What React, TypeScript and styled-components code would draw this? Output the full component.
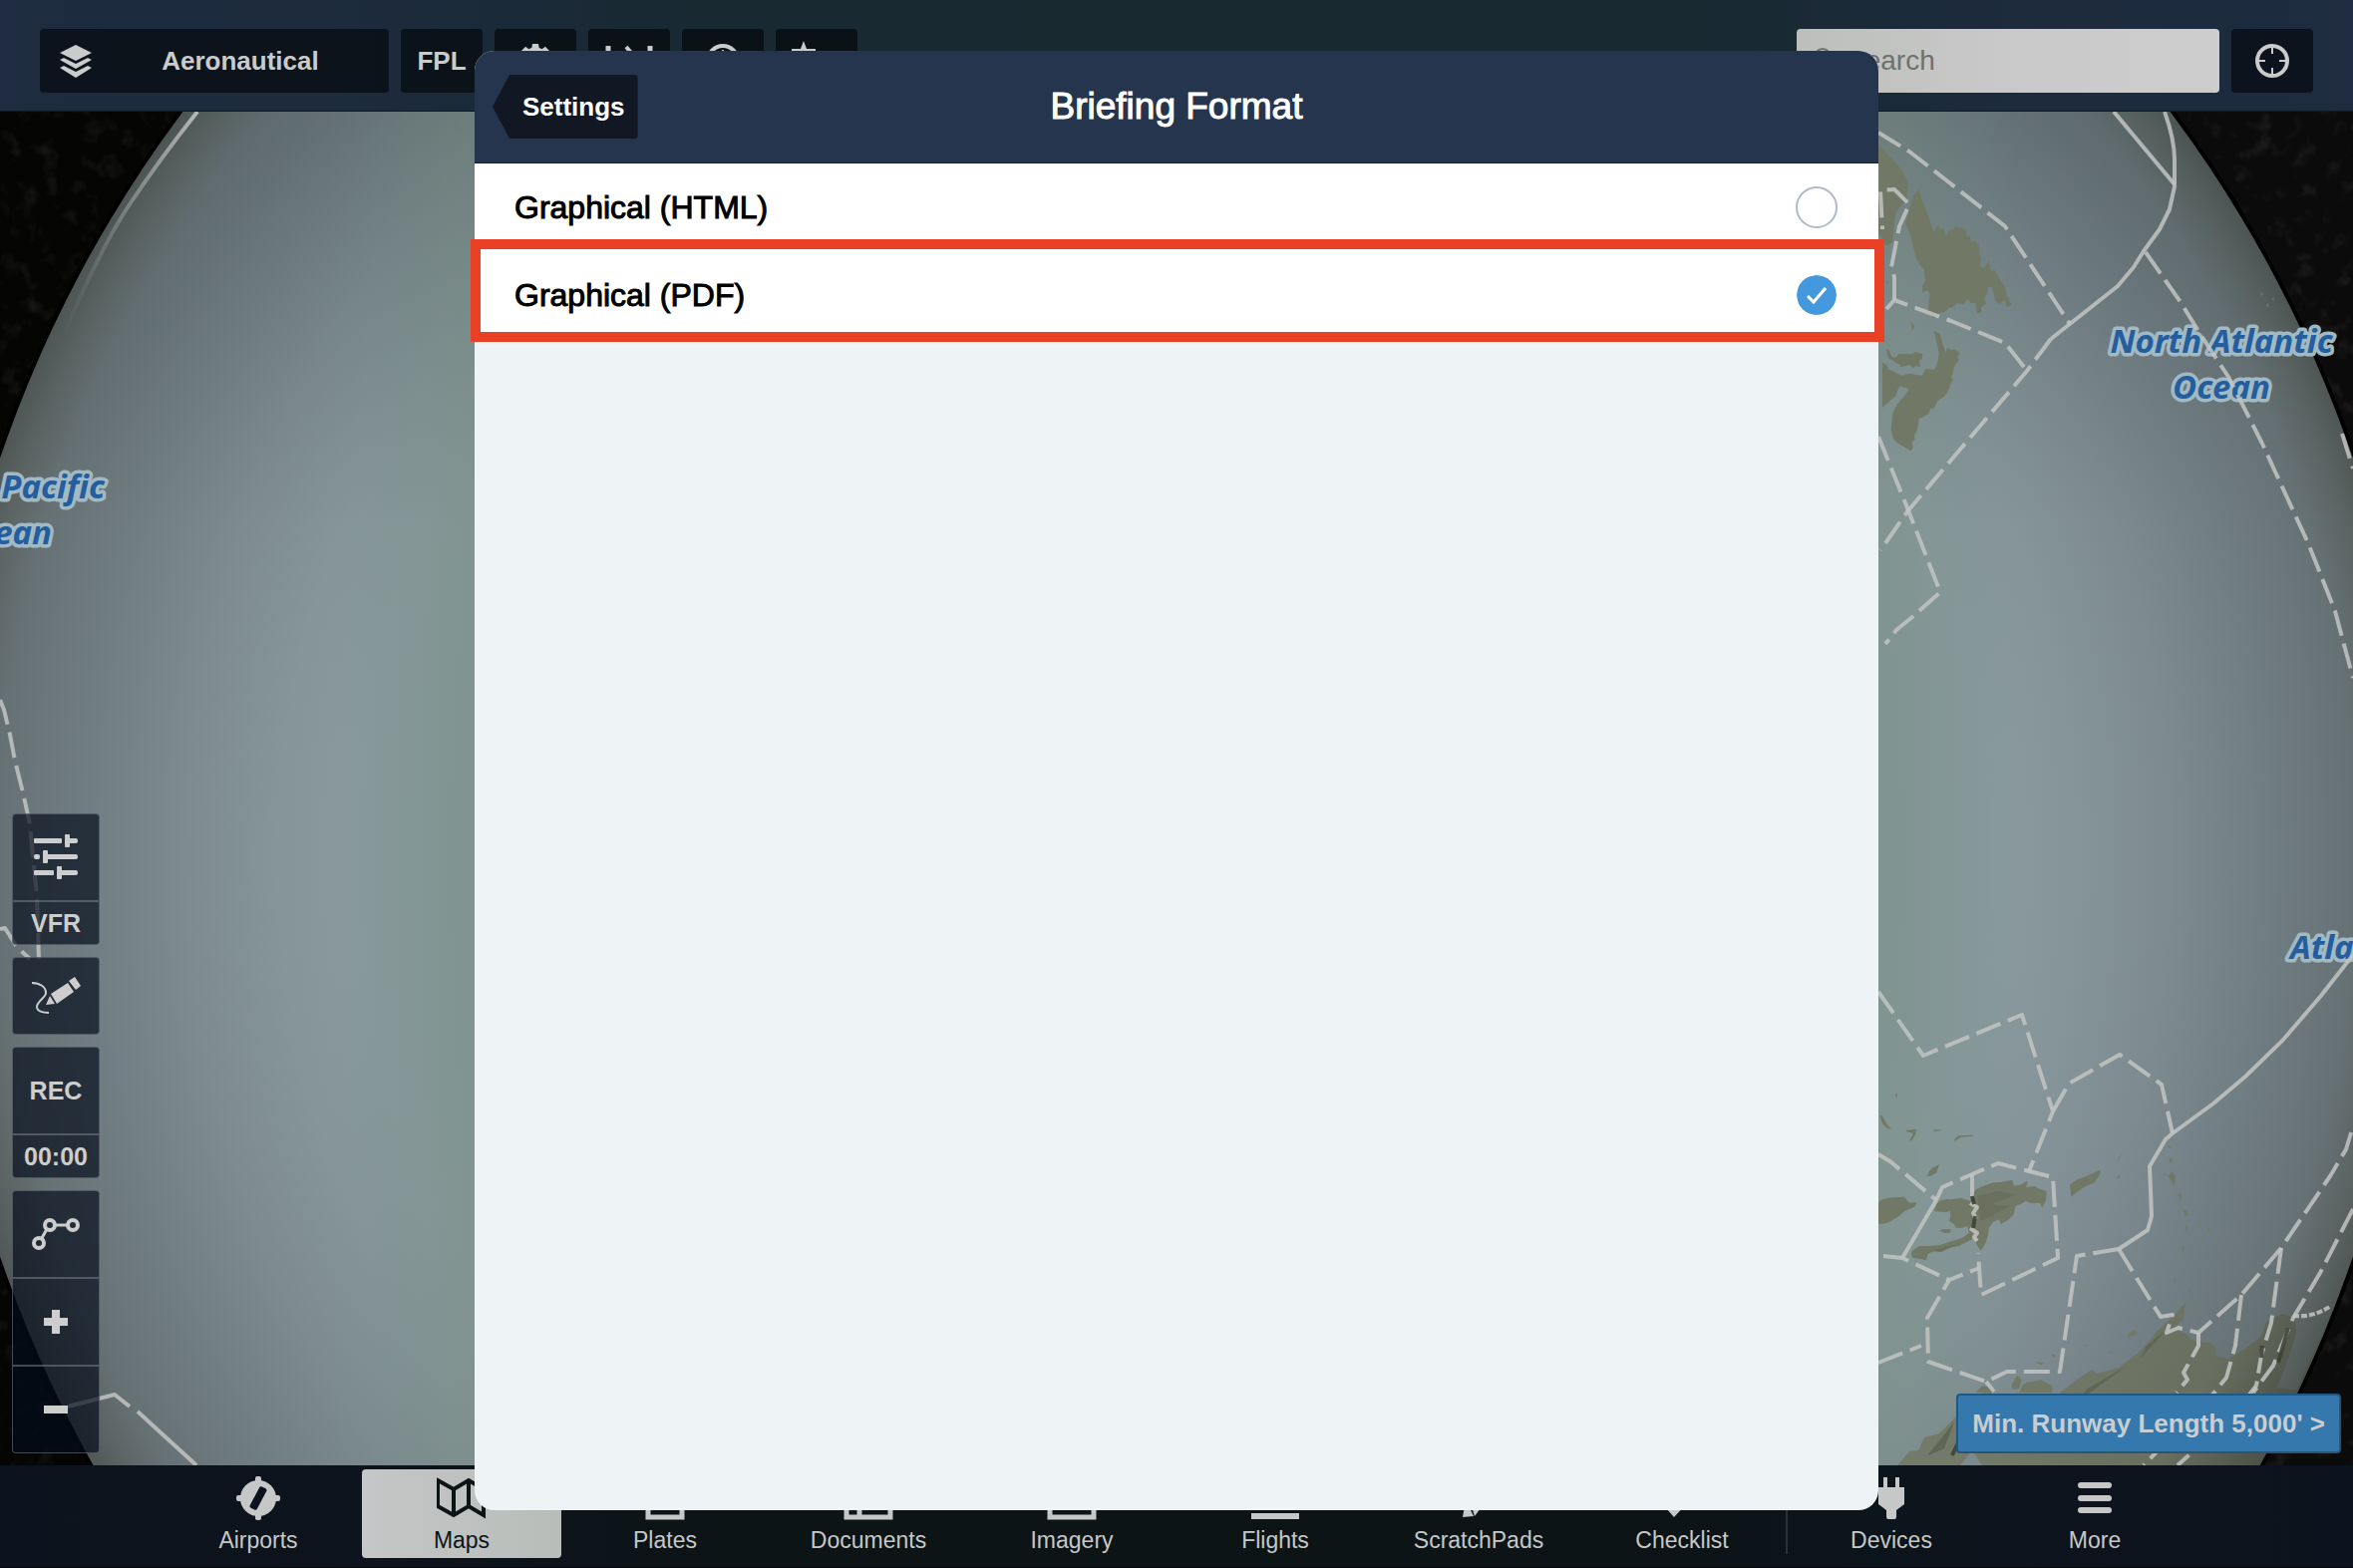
import React from 'react';
import styled, { createGlobalStyle, css } from 'styled-components';

const GlobalStyle = createGlobalStyle`
  *, *::before, *::after { box-sizing: border-box; }
  body {
    margin: 0;
    background: #050505;
    font-family: "Liberation Sans", Arial, Helvetica, sans-serif;
  }
  button, input { font: inherit; margin: 0; }
`;

const Page = styled.div`
  position: relative;
  display: flex;
  flex-direction: column;
  height: 100vh;
  overflow: hidden;
`;

/* ---------- top bar ---------- */

const TopBar = styled.header`
  display: flex;
  flex: none;
  align-items: center;
  gap: 12px;
  padding: 29px 40px 18px;
  border-bottom: 1px solid #0f1b22;
  background: linear-gradient(90deg, #1e2b40 0%, #1d2b3d 14%, #192933 28%, #182930 50%, #192933 74%, #1d2b3d 86%, #1e2b40 100%);
`;

const barButton = css`
  display: flex;
  align-items: center;
  justify-content: center;
  height: 64px;
  padding: 0;
  border: 0;
  border-radius: 4px;
  background: rgba(2, 5, 6, 0.62);
  color: #cacccb;
  font-size: 26px;
  font-weight: 700;
`;

const BarButton = styled.button`
  ${barButton}
  flex: none;
  width: 82px;
`;

const LayerButton = styled.button`
  ${barButton}
  width: 350px;
  padding-left: 20px;
`;

const LayerName = styled.span`
  flex: 1;
  text-align: center;
`;

const SearchBox = styled.label`
  display: flex;
  align-items: center;
  gap: 14px;
  width: 424px;
  height: 64px;
  margin-left: auto;
  padding: 0 16px;
  border-radius: 4px;
  background: linear-gradient(90deg, #bcbfbb 0%, #c9c9c9 50%, #cdcdcd 100%);
  color: #6f7170;
`;

const SearchInput = styled.input`
  flex: 1;
  min-width: 0;
  padding: 0;
  border: 0;
  outline: 0;
  background: transparent;
  color: #333;
  font-size: 28px;
  &::placeholder { color: #6f7170; opacity: 1; }
`;

/* ---------- map ---------- */

const MapArea = styled.main`
  position: relative;
  flex: 1;
  min-height: 0;
`;

const MapCanvas = styled.svg`
  position: absolute;
  inset: 0;
  width: 100%;
  height: 100%;
`;

const MapTools = styled.div`
  position: absolute;
  left: 12px;
  bottom: 12px;
  display: flex;
  flex-direction: column;
  gap: 12px;
  width: 88px;
`;

const ToolGroup = styled.div`
  display: flex;
  flex-direction: column;
  border: 1px solid rgba(125, 135, 145, 0.5);
  border-radius: 4px;
  background: rgba(5, 13, 28, 0.69);
`;

const Tool = styled.button<{ $height: number }>`
  display: flex;
  align-items: center;
  justify-content: center;
  height: ${(p) => p.$height}px;
  padding: 0;
  border: 0;
  background: transparent;
  color: #cdcdcd;
  font-size: 25px;
  font-weight: 700;
  & + & { border-top: 2px solid rgba(125, 135, 145, 0.5); }
`;

const RunwayButton = styled.button`
  position: absolute;
  right: 12px;
  bottom: 12px;
  height: 60px;
  padding: 0 14px;
  border: 2px solid #22577f;
  border-radius: 4px;
  background: #3478ae;
  color: #c9cdd0;
  font-size: 26px;
  font-weight: 700;
  white-space: nowrap;
`;

/* ---------- tab bar ---------- */

const TabBar = styled.nav`
  display: flex;
  flex: none;
  justify-content: center;
  gap: 4px;
  padding: 4px 0 9px;
  border-bottom: 1px solid #04080c;
  background: linear-gradient(90deg, #0d131e 0%, #0d141d 18%, #0c1416 32%, #0c1416 68%, #0d141d 84%, #0d131e 100%);
`;

const Tab = styled.button<{ $active?: boolean }>`
  display: flex;
  flex-direction: column;
  align-items: center;
  gap: 6px;
  width: 200px;
  height: 89px;
  padding: 7px 0 4px;
  border: 0;
  border-radius: 4px;
  background: ${(p) => (p.$active ? 'linear-gradient(90deg, #c5c6c7, #b8bdb9)' : 'transparent')};
  color: ${(p) => (p.$active ? '#0c1416' : '#c6c8c7')};
  font-size: 23px;
  line-height: 28px;
  svg { display: block; flex: none; }
`;

const TabDivider = styled.div`
  width: 2px;
  margin: 4px 0;
  background: #2a3135;
`;

/* ---------- dialog ---------- */

const Overlay = styled.div`
  position: absolute;
  inset: 0;
  display: flex;
  justify-content: center;
  padding: 51px 0 58px;
`;

const Dialog = styled.section`
  display: flex;
  flex-direction: column;
  width: 1408px;
  max-width: 100%;
  border-radius: 20px;
  background: #eef3f6;
`;

const DialogHeader = styled.header`
  display: grid;
  grid-template-columns: 1fr auto 1fr;
  align-items: center;
  height: 113px;
  padding: 0 18px;
  border-bottom: 1px solid #14222d;
  border-radius: 20px 20px 0 0;
  background: #24354d;
  color: #fff;
`;

const BackButton = styled.button`
  justify-self: start;
  height: 64px;
  padding: 0 13px 0 30px;
  border: 0;
  border-radius: 4px;
  background: #111823;
  color: #fff;
  font-size: 26px;
  font-weight: 700;
  clip-path: polygon(17px 0, 100% 0, 100% 100%, 17px 100%, 0 50%);
`;

const DialogTitle = styled.h1`
  margin: 0;
  font-size: 37px;
  line-height: 44px;
  font-weight: 400;
  -webkit-text-stroke: 1px currentColor;
`;

const Options = styled.div`
  display: flex;
  flex-direction: column;
`;

const Option = styled.label<{ $marked?: boolean }>`
  position: relative;
  display: flex;
  align-items: center;
  justify-content: space-between;
  height: 88px;
  padding: 0 41px 0 40px;
  background: #fff;
  color: #000;
  font-size: 32px;
  -webkit-text-stroke: 1px currentColor;
  ${(p) =>
    p.$marked &&
    css`
      &::after {
        content: '';
        position: absolute;
        inset: -12px -6px -3px -4px;
        border: 10px solid #ea4025;
        pointer-events: none;
      }
    `}
`;

const RadioWrap = styled.span`
  display: grid;
  place-items: center;
  & > * { grid-area: 1 / 1; }
  svg { pointer-events: none; }
`;

const Radio = styled.input`
  appearance: none;
  width: 42px;
  height: 42px;
  border: 2px solid #b0b9c6;
  border-radius: 50%;
  background: #fff;
  &:checked { border: 1px solid #fff; background: #4498de; background-clip: padding-box; }
`;

/* ---------- icons ---------- */

const LayersIcon = () => (
  <svg width="32" height="33" viewBox="0 0 32 33" fill="currentColor" aria-hidden="true">
    <path d="M16 0 32 8 16 16 0 8zM0 15l4-2 12 6 12-6 4 2-16 9zM0 23l4-2 12 6 12-6 4 2-16 10z" />
  </svg>
);

const GearIcon = () => (
  <svg width="36" height="36" viewBox="0 0 36 36" fill="none" stroke="currentColor" aria-hidden="true">
    <circle cx="18" cy="18" r="10" strokeWidth="7" />
    {[0, 45, 90, 135, 180, 225, 270, 315].map((angle) => (
      <path key={angle} d="M14 7l1-6h6l1 6z" fill="currentColor" stroke="none" transform={`rotate(${angle} 18 18)`} />
    ))}
  </svg>
);

const RangeIcon = () => (
  <svg width="48" height="32" viewBox="0 0 48 32" fill="none" stroke="currentColor" strokeWidth="5" aria-hidden="true">
    <path d="M3 1v30M45 1v30" />
    <path d="M21 2l12 14-12 14" strokeWidth="4" />
  </svg>
);

const ClockIcon = () => (
  <svg width="38" height="38" viewBox="0 0 38 38" fill="none" stroke="currentColor" aria-hidden="true">
    <circle cx="19" cy="19" r="15" strokeWidth="4" />
    <path d="M19 8v12l6 4" strokeWidth="2" />
  </svg>
);

const StarIcon = () => (
  <svg width="50" height="40" viewBox="0 0 50 40" fill="currentColor" aria-hidden="true">
    <path d="M12 0l3 8h9v2l-6 6 3 10-9-5-9 5 3-10-6-6V8h9z" />
    <path d="M28 24h20v4H28zM28 32h20v4H28z" />
  </svg>
);

const SearchIcon = () => (
  <svg width="20" height="28" viewBox="0 0 20 28" fill="none" stroke="currentColor" strokeWidth="2" aria-hidden="true">
    <circle cx="10" cy="10" r="8" />
    <path d="M14 17l5 8" />
  </svg>
);

const LocateIcon = () => (
  <svg width="36" height="36" viewBox="0 0 36 36" fill="none" stroke="currentColor" aria-hidden="true">
    <circle cx="18" cy="18" r="15" strokeWidth="4" />
    <path d="M18 4v7M18 25v7M4 18h7M25 18h7" strokeWidth="2" />
  </svg>
);

const SlidersIcon = () => (
  <svg width="44" height="46" viewBox="0 0 44 46" fill="currentColor" aria-hidden="true">
    <rect x="0" y="4" width="28" height="5" rx="1" />
    <rect x="31" y="4" width="13" height="5" rx="2" />
    <rect x="31" y="0" width="5" height="13" rx="1" />
    <rect x="0" y="20" width="6" height="5" rx="2" />
    <rect x="9" y="20" width="35" height="5" rx="2" />
    <rect x="9" y="16" width="5" height="13" rx="1" />
    <rect x="0" y="36" width="20" height="5" rx="1" />
    <rect x="23" y="36" width="21" height="5" rx="2" />
    <rect x="23" y="32" width="5" height="13" rx="1" />
  </svg>
);

const DrawIcon = () => (
  <svg width="50" height="38" viewBox="0 0 50 38" fill="currentColor" aria-hidden="true">
    <path d="M1 6c8 0 14 4 14 10 0 5-10 9-9 15 1 3 6 5 12 5" fill="none" stroke="currentColor" strokeWidth="2" />
    <path d="M20 17 37 6l6 9-17 12zM38 4l6-4 6 9-5 4zM19 19l5 8-9 1z" />
  </svg>
);

const RouteIcon = () => (
  <svg width="48" height="34" viewBox="0 0 48 34" fill="none" stroke="currentColor" strokeWidth="4" aria-hidden="true">
    <circle cx="7" cy="26" r="5" />
    <circle cx="18" cy="8" r="5" />
    <circle cx="41" cy="8" r="5" />
    <path d="M23 8h13M15 12l-5 9" strokeWidth="3" />
  </svg>
);

const PlusIcon = () => (
  <svg width="24" height="24" viewBox="0 0 24 24" fill="currentColor" aria-hidden="true">
    <path d="M8 0h8v8h8v8h-8v8H8v-8H0V8h8z" />
  </svg>
);

const MinusIcon = () => (
  <svg width="24" height="8" viewBox="0 0 24 8" fill="currentColor" aria-hidden="true">
    <path d="M0 0h24v8H0z" />
  </svg>
);

const tabIcons: Record<string, React.ReactNode> = {
  Airports: (
    <>
      <circle cx="25" cy="22" r="18" />
      <rect x="22" y="0" width="6" height="44" rx="2" />
      <rect x="3" y="19" width="44" height="6" rx="2" />
      <rect x="21" y="10" width="8" height="24" rx="2" fill="#0d131e" transform="rotate(28 25 22)" />
    </>
  ),
  Maps: (
    <path
      d="M2 6l16 9 15-9 15 9v26l-15-9-15 9-16-9zM18 15v24M33 6v26"
      fill="none"
      stroke="currentColor"
      strokeWidth="4"
      transform="translate(-1 -2)"
    />
  ),
  Plates: <path d="M8 2h34v39H8z" fill="none" stroke="currentColor" strokeWidth="5" />,
  Documents: <path d="M3 5h44v36H3zM16 5v36" fill="none" stroke="currentColor" strokeWidth="5" />,
  Imagery: <path d="M3 5h44v36H3z" fill="none" stroke="currentColor" strokeWidth="5" />,
  Flights: <path d="M1 37h48v6H1zM4 16l20 8 20-8-8 12H14z" />,
  ScratchPads: <path d="M12 24l8 16-11 1zM16 24l20-20 8 8-20 24-3 4z" />,
  Checklist: <path d="M0 22l6-6 10 12L40 4l6 6-29 31z" />,
  Devices: (
    <path d="M17 1h4v10h-4zM29 1h4v10h-4zM12 11h26v17l-8 6v7q0 2-2 2h-6q-2 0-2-2v-7l-8-6z" />
  ),
  More: (
    <>
      <rect x="8" y="6" width="34" height="6" rx="3" />
      <rect x="8" y="19" width="34" height="6" rx="3" />
      <rect x="8" y="31" width="34" height="6" rx="3" />
    </>
  ),
};

const TabItem = ({ name, active }: { name: string; active?: boolean }) => (
  <Tab type="button" $active={active} aria-current={active ? 'page' : undefined}>
    <svg width="50" height="44" viewBox="0 0 50 44" fill="currentColor" aria-hidden="true">
      {tabIcons[name]}
    </svg>
    {name}
  </Tab>
);

/* ---------- globe ---------- */

const boundaries = [
  'M1884 133 1915 152 1951 180 2011 227 2076 325',
  'M2057 340 2033 372 1914 512 1886 552',
  'M2152 253 2187 303 2208 337 2235 378 2269 445 2315 545 2329 580 2342 613 2360 680',
  'M1892 310 1900 301 1957 322 2011 344 2033 372',
  'M1900 301V278L1897 268 1905 227 1915 205 1900 190 1886 191 1888 230',
  'M1884 438 1914 512 1946 594 1918 619 1902 632 1891 646',
  'M2349 435 2360 470',
  'M1884 995 1929 1059 2028 1018 2059 1115 2035 1175',
  'M2059 1115 2075 1087 2126 1058 2168 1088 2179 1137',
  'M2125 1253 2083 1260 2066 1376 2013 1376 1992 1386 1934 1366 1933 1322 1955 1284 1985 1272',
  'M1884 1158 1897 1166 1942 1204',
  'M1889 1260 1908 1262 1955 1284',
  'M1942 1204 1948 1191 1978 1178 2004 1167 2059 1181 2064 1262 1987 1299 1984 1257',
  'M1978 1178V1200',
  'M2125 1253 2167 1321 2179 1319 2173 1337 2185 1332 2205 1337 2248 1299 2288 1252 2337 1180 2353 1153 2360 1130',
  'M2360 1213 2327 1277 2300 1322 2280 1370 2260 1397',
  'M2288 1252 2278 1327 2268 1360 2263 1390 2240 1420 2184 1470',
  'M2248 1299 2242 1350 2233 1382 2220 1398 2150 1470',
  'M2205 1337V1350L2190 1377 2194 1384 2183 1397',
  'M1884 1367 1927 1350',
  'M1992 1386 2000 1396',
  'M0 702 4 712 10 737 15 763 23 795 30 827 33 860 37 897 39 965',
  'M0 932 5 931 17 950 30 962',
];

const solidBoundaries = [
  'M2120 112 2181 185',
  'M2171 112Q2181 140 2181 160V187L2176 210 2166 230 2150 252 2140 268 2124 287 2076 325 2057 340',
  'M2360 958 2327 1000 2290 1043 2252 1080 2220 1107 2179 1137 2172 1143 2156 1170 2158 1220 2154 1234 2125 1253',
  'M1942 1204 1908 1262',
  'M68 1411 115 1399 130 1411M138 1416 197 1470',
];

const Globe = () => (
  <MapCanvas viewBox="0 112 2360 1358" preserveAspectRatio="xMidYMid slice" role="img" aria-label="Map">
    <defs>
      <radialGradient id="sea" gradientUnits="userSpaceOnUse" cx="1180" cy="860" r="1246">
        <stop offset="0.5" stopColor="#849899" />
        <stop offset="0.6" stopColor="#87999c" />
        <stop offset="0.66" stopColor="#89999d" />
        <stop offset="0.72" stopColor="#86959a" />
        <stop offset="0.8" stopColor="#7d8b90" />
        <stop offset="0.88" stopColor="#707d82" />
        <stop offset="0.95" stopColor="#667174" />
        <stop offset="0.98" stopColor="#5b6462" />
        <stop offset="1" stopColor="#505856" />
      </radialGradient>
      <linearGradient id="tint" gradientUnits="userSpaceOnUse" x1="0" y1="0" x2="2360" y2="0">
        <stop offset="0.14" stopColor="#728a78" stopOpacity="0" />
        <stop offset="0.2" stopColor="#728a78" stopOpacity="0.32" />
        <stop offset="0.8" stopColor="#728a78" stopOpacity="0.32" />
        <stop offset="0.86" stopColor="#728a78" stopOpacity="0" />
      </linearGradient>
      <radialGradient id="land" gradientUnits="userSpaceOnUse" cx="1180" cy="860" r="1246">
        <stop offset="0.8" stopColor="#747a69" />
        <stop offset="0.93" stopColor="#696f60" />
        <stop offset="1" stopColor="#4d5248" />
      </radialGradient>
      <linearGradient id="topShade" x1="0" y1="0" x2="0" y2="1">
        <stop offset="0" stopColor="#2a3b3a" stopOpacity="0.14" />
        <stop offset="1" stopColor="#2a3b3a" stopOpacity="0" />
      </linearGradient>
      <linearGradient id="rimLine" gradientUnits="userSpaceOnUse" x1="198" y1="112" x2="60" y2="340">
        <stop offset="0" stopColor="#b4b8b6" />
        <stop offset="1" stopColor="#7d8482" stopOpacity="0" />
      </linearGradient>
      <filter id="grain" x="0" y="0" width="100%" height="100%">
        <feTurbulence type="fractalNoise" baseFrequency="0.05" numOctaves="3" seed="4" />
        <feColorMatrix values="0 0 0 0 0.3  0 0 0 0 0.28  0 0 0 0 0.26  1.6 0 0 0 -0.85" />
      </filter>
      <clipPath id="disc">
        <circle cx="1180" cy="860" r="1246" />
      </clipPath>
    </defs>
    <rect y="112" width="2360" height="1358" fill="#050504" />
    <rect y="112" x="1180" width="1180" height="1358" fill="#0c0b0b" />
    <rect y="112" width="2360" height="1358" filter="url(#grain)" opacity="0.22" />
    <circle cx="1180" cy="860" r="1247" fill="none" stroke="#000" strokeWidth="6" />
    <circle cx="1180" cy="860" r="1246" fill="url(#sea)" />
    <g clipPath="url(#disc)">
      <rect y="112" width="2360" height="1358" fill="url(#tint)" />
      <rect y="112" width="2360" height="420" fill="url(#topShade)" />
      <g fill="#717866">
        <g transform="translate(1760 0) scale(.3827 .3333)">
          <path d="M324 435l26 30 35 45 17 40-4 50-28 40-10 90-15 10-21-40z" />
          <path d="M415 590l15-20 8 30 7 20 10 30 6 20 9 30 6-20 6 0 4 10 8-4 2 8 5 18 10-22 4 4 8-8 3-8 10 8 10 0 8 8 3 20 6-6 4 22 8-6 12 12 2 30 5 12-4 20 9 10 15-22 5 30 10-4 14 30 14 24 3 24 13 26-11 10-8-24-12 14-12-12-8-40-10 0-2 20-8 10 4 20-12 10-2 18-10 0-3-30-12 0-8-12-14 16-14-4-12 12-12 4-8 10-18 6-12 14-15-22 5-55-8-8-12 8 0-20 8-14-3-36-8-8-12-22-6-26-9-44-14-40z" />
          <path d="M410 965l8 20-6 10zM345 845l5 5-4 6zM1325 880l8 4-4 8zM1340 920l5-8 2 14zM1356 900l4-6v12z" />
        </g>
        <g transform="translate(1760 220) scale(.3827 .3333)">
          <path d="M470 335l15 10 6 24 9 31 5-14 10 8 6-4 16 11-6 14 4 8-12 20-8 35 6 5-8 12-4 16-9 19-20 16-10 22-10 2-4 14-16 12-10 4-2 20-3 16-7 14 2 12-8 10 2 15-5 10-37-25-10-14-5-26 2-24 3-26 10-24 20-26 12-20-6-4-19-6-10 30-35 35V430l12 8 4 14 9 3 20 12 5 3 20-6 35 6 8-20 24 2 8-22 4-26z" />
          <path d="M345 390l6 4 9 21 10 0 8-10 22 0 14 0 6-6 20 6-2 16-8 4 4 20-10-4-10 6-8-10-22 8-4-8-10-4-6-8-14-8z" />
        </g>
        <g transform="translate(1860 960) scale(.3333)">
          <path d="M240 765l6-18 9-12 20-6 15 1 30-4 30 9 8-22 7-13 16-8 19-7 20-6 20-1 18-4 17-2 5 18 20-4 20-6-4 12 4 0 25-2 6 6 27 9-1 16-2 14-10 20-6-14-9-1-18 2-17-7-14 8-16 7-6 24-14 16-25 15-3-10-2-5-18 8-12 17-2 20-8 25-15 25-9-14-6-11v-15l-22 10-28 15-24 4-36 6-14 4-21 11-2 12-3 5-24-4-16-3-4-10 2-10 22-15 26 0 34-2 28-10 42-13 20-15-2-8-3-12-18 6-17-1-6-12-14-8 4-14-2-16-14 4z" />
          <path d="M648 685l24-16 34-12 34-17-2 15-6 10-12 15-20 8-22 14-26 20zM72 745l3-10 10-6 30-5 35-2 15 18 23-2-8 14-30 14-16 14-24 15-20 8-18 0zM256 823l14-4 20 1-2 10-18 0zM218 660l8-16 7-9 10-4 12-6-8 24-18 10zM470 690l30-4 20-12 0 12-14 6-30 10z" />
          <path d="M365 1310l20-20 40 10-15 15zM472 1290l10-20 8-10 6 4 7 11-8 25-17 2zM495 1312l10-22 15-10 12 0 28-7 15 8 20 9v22zM545 1218l25 4-10 6zM592 1196l12 2-4 8zM820 1150l8-18 12-7 12 4-8 10-16 5zM690 1170l8-2 0 4zM765 1188l10 0-6 5zM945 660l12-15 4 8 6 12-5 25zM972 710l10 5 0 20zM930 650l8 4-4 4zM988 760l14 6 2 14-10-2zM996 810l8 2-3 20zM985 880l8-14-3 24zM948 605l10 8-8 8zM943 568l8 2-2 6zM1062 815l8 8-6 6zM962 970l6 2-6 12zM1003 1008l14-18-8 18zM155 522l30-4 0 14-12 20-8 2 12-24-20-4zM238 520l28 1-25 5zM300 550l12-12 43-2 0 4-34 2-19 12zM122 415l6-6v16zM76 475l8 4 14 26 14 14-14-4-14-14zM785 620l14-16 6-20-8 18zM786 666l14-12-4 10z" />
        </g>
      </g>
      <path
        fill="url(#land)"
        d="M1903 1470 1910 1462 1915 1456 1924 1455 1930 1442 1945 1438 1955 1428 1963 1420 1966 1398 2065 1398 2080 1386 2098 1374 2103 1378 2125 1372 2146 1356 2165 1334 2178 1322 2192 1307 2190 1323 2180 1333 2193 1338 2200 1345 2217 1347 2223 1353 2222 1360 2235 1363 2247 1356 2260 1347 2268 1341 2273 1327 2288 1318 2302 1322 2303 1337 2297 1358 2284 1392 2303 1395 2326 1345 2345 1310 2360 1310 2360 1470H1988L1978 1455 1966 1470z"
      />
      <g transform="translate(1860 960) scale(.3333)">
        <path d="M220 1500l80-100-30 80zM700 1300l120-70-150 110zM880 1170l60-50-80 90z" fill="#5f6656" />
        <path d="M370 720l60-15 60 10-80 30 60 5-90 45zM230 885l90-25-60 28z" fill="#6a705d" />
      </g>
    </g>
    <path d="M198 112Q160 160 130 205T62 340" fill="none" stroke="url(#rimLine)" strokeWidth="4" />
    <g fill="#245e9f" stroke="#a1b9c3" strokeWidth="7" strokeLinejoin="round" paintOrder="stroke" textAnchor="middle" fontFamily="'Noto Sans', 'Open Sans', sans-serif" fontSize="33" fontWeight="700" fontStyle="italic">
      <text x="2228" y="354">North Atlantic</text>
      <text x="2228" y="400">Ocean</text>
      <text x="3" y="500">North Pacific</text>
      <text x="3" y="546">Ocean</text>
      <text x="2297" y="962" textAnchor="start">Atlantic</text>
    </g>
    <g fill="none" stroke="#c2c4c2" strokeOpacity="0.85" strokeLinejoin="round">
      <g strokeWidth="4" strokeDasharray="26 8">
        {boundaries.map((d) => (
          <path key={d} d={d} />
        ))}
      </g>
      <g strokeWidth="4">
        {solidBoundaries.map((d) => (
          <path key={d} d={d} />
        ))}
      </g>
      <path d="M2300 1320Q2320 1322 2338 1310" strokeWidth="4" strokeDasharray="6 2" />
      <path d="M1976 1207l7 4-4 6 3 6M1976 1232l7 5-3 4 3 4" strokeWidth="4" />
      <path d="M1978 1200l2 8M1981 1220l-2 12M1965 1445l-7 15M2295 1332l-10 35M2269 1350l-1 12" stroke="#3b3f33" strokeWidth="4" />
    </g>
  </MapCanvas>
);

/* ---------- page ---------- */

const CheckMark = () => (
  <svg width="20" height="18" viewBox="0 0 20 18" fill="none" stroke="#fff" strokeWidth="3" aria-hidden="true">
    <path d="M1 10l6 6L19 2" />
  </svg>
);

const formats = [
  { id: 'html', label: 'Graphical (HTML)', marked: false },
  { id: 'pdf', label: 'Graphical (PDF)', marked: true },
];

export default function App() {
  const [format, setFormat] = React.useState('pdf');

  return (
    <Page>
      <GlobalStyle />
      <TopBar>
        <LayerButton type="button">
          <LayersIcon />
          <LayerName>Aeronautical</LayerName>
        </LayerButton>
        <BarButton type="button">FPL</BarButton>
        <BarButton type="button" aria-label="Map settings"><GearIcon /></BarButton>
        <BarButton type="button" aria-label="Range"><RangeIcon /></BarButton>
        <BarButton type="button" aria-label="Time"><ClockIcon /></BarButton>
        <BarButton type="button" aria-label="Favorites"><StarIcon /></BarButton>
        <SearchBox>
          <SearchIcon />
          <SearchInput type="search" placeholder="Search" aria-label="Search" />
        </SearchBox>
        <BarButton type="button" aria-label="Center on location"><LocateIcon /></BarButton>
      </TopBar>

      <MapArea>
        <Globe />
        <MapTools>
          <ToolGroup>
            <Tool type="button" $height={86} aria-label="Filters"><SlidersIcon /></Tool>
            <Tool type="button" $height={44}>VFR</Tool>
          </ToolGroup>
          <ToolGroup>
            <Tool type="button" $height={76} aria-label="Draw"><DrawIcon /></Tool>
          </ToolGroup>
          <ToolGroup>
            <Tool type="button" $height={86}>REC</Tool>
            <Tool type="button" $height={44}>00:00</Tool>
          </ToolGroup>
          <ToolGroup>
            <Tool type="button" $height={86} aria-label="Route"><RouteIcon /></Tool>
            <Tool type="button" $height={88} aria-label="Zoom in"><PlusIcon /></Tool>
            <Tool type="button" $height={88} aria-label="Zoom out"><MinusIcon /></Tool>
          </ToolGroup>
        </MapTools>
        <RunwayButton type="button">Min. Runway Length 5,000' &gt;</RunwayButton>
      </MapArea>

      <TabBar>
        <TabItem name="Airports" />
        <TabItem name="Maps" active />
        <TabItem name="Plates" />
        <TabItem name="Documents" />
        <TabItem name="Imagery" />
        <TabItem name="Flights" />
        <TabItem name="ScratchPads" />
        <TabItem name="Checklist" />
        <TabDivider />
        <TabItem name="Devices" />
        <TabItem name="More" />
      </TabBar>

      <Overlay>
        <Dialog role="dialog" aria-labelledby="dialog-title">
          <DialogHeader>
            <BackButton type="button">Settings</BackButton>
            <DialogTitle id="dialog-title">Briefing Format</DialogTitle>
          </DialogHeader>
          <Options role="radiogroup" aria-labelledby="dialog-title">
            {formats.map((f) => (
              <Option key={f.id} $marked={f.marked}>
                {f.label}
                <RadioWrap>
                  <Radio type="radio" name="format" checked={format === f.id} onChange={() => setFormat(f.id)} />
                  {format === f.id && <CheckMark />}
                </RadioWrap>
              </Option>
            ))}
          </Options>
        </Dialog>
      </Overlay>
    </Page>
  );
}
